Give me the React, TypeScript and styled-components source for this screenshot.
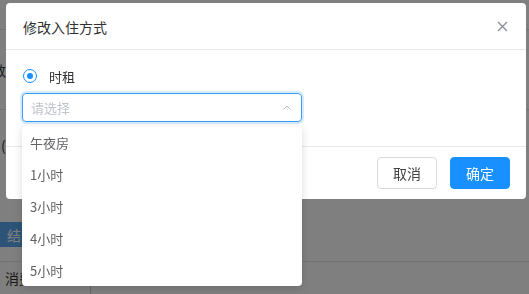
import React from "react";
import styled, { createGlobalStyle } from "styled-components";

const Global = createGlobalStyle`
  html, body { margin: 0; padding: 0; background: #fff; }
  body { font-family: "Noto Sans CJK SC", "Noto Sans", sans-serif; width: 529px; height: 294px; overflow: hidden; }
  * { box-sizing: border-box; }
`;

/* ---------- background page ---------- */
const Page = styled.div`
  width: 529px;
  height: 294px;
  display: flex;
  flex-direction: column;
  color: #333;
  font-size: 14px;
  overflow: hidden;
`;
const PageTop = styled.div`
  height: 30px;
  border-bottom: 1px solid #e2e2e2;
`;
const PageSection = styled.div<{ $h: number; $line?: boolean; $indent: number }>`
  height: ${(p) => p.$h}px;
  display: flex;
  align-items: center;
  margin-left: ${(p) => p.$indent}px;
  border-bottom: ${(p) => (p.$line ? "1px solid #e6e6e6" : "none")};
  line-height: 20px;
`;
const Spacer = styled.div<{ $h: number }>`
  height: ${(p) => p.$h}px;
`;
const BlueBar = styled.div`
  height: 25px;
  width: 120px;
  background: #5aa9f0;
  color: #fff;
  display: flex;
  align-items: center;
  padding-left: 7px;
  font-size: 14px;
`;
const BottomRow = styled.div`
  flex: 1;
  border-top: 1px solid #e6e6e6;
  margin-top: 14px;
  display: flex;
  align-items: center;
  padding-left: 5px;
  gap: 6px;
  font-size: 14px;
`;
const BottomField = styled.div`
  margin-left: 20px;
  height: 100%;
  border-left: 1px solid #ccc;
  display: flex;
  align-items: center;
  padding-left: 11px;
  gap: 10px;
`;
const Check = styled.span`
  width: 13px;
  height: 13px;
  border: 1px solid #bbb;
  border-radius: 2px;
  background: #fff;
`;

/* ---------- modal ---------- */
const Mask = styled.div`
  position: fixed;
  inset: 0;
  background: rgba(0, 0, 0, 0.5);
`;
const Modal = styled.div`
  position: absolute;
  left: 6px;
  top: 3px;
  width: 520px;
  background: #fff;
  border-radius: 4px;
  display: flex;
  flex-direction: column;
`;
const Header = styled.div`
  height: 47px;
  border-bottom: 1px solid #e8e8e8;
  display: flex;
  align-items: center;
  justify-content: space-between;
  padding: 0 18px 0 17px;
`;
const Title = styled.div`
  font-size: 14px;
  color: #303133;
  padding-top: 1px;
`;
const Close = styled.button`
  border: none;
  background: none;
  padding: 0;
  width: 12px;
  height: 12px;
  display: flex;
  align-items: center;
  justify-content: center;
  cursor: pointer;
`;
const Body = styled.div`
  height: 97px;
  padding: 15px 16px 0 16px;
  display: flex;
  flex-direction: column;
  gap: 6px;
  border-bottom: 1px solid #e8e8e8;
`;
const RadioRow = styled.label`
  display: flex;
  align-items: center;
  gap: 12px;
  height: 22px;
  padding-left: 1px;
  font-size: 13px;
  color: #303133;
`;
const RadioDot = styled.span`
  width: 14px;
  height: 14px;
  border-radius: 50%;
  border: 1px solid #1890ff;
  display: flex;
  align-items: center;
  justify-content: center;
  &::after {
    content: "";
    width: 6px;
    height: 6px;
    border-radius: 50%;
    background: #1890ff;
  }
`;
const SelectWrap = styled.div`
  position: relative;
  width: 280px;
`;
const SelectBox = styled.div`
  height: 29px;
  border: 1px solid #3a9cf5;
  border-radius: 4px;
  box-shadow: 0 0 0 2px rgba(24, 144, 255, 0.18);
  display: flex;
  align-items: center;
  justify-content: space-between;
  padding: 0 10px 0 8px;
  font-size: 13px;
  color: #c0c4cc;
`;
const Dropdown = styled.ul`
  position: absolute;
  left: 0;
  top: 33px;
  width: 280px;
  margin: 0;
  padding: 0;
  list-style: none;
  background: #fff;
  border-radius: 4px;
  box-shadow: 0 2px 8px rgba(0, 0, 0, 0.15);
  z-index: 5;
`;
const Option = styled.li`
  height: 32px;
  display: flex;
  align-items: center;
  padding-left: 8px;
  font-size: 13px;
  color: #606266;
`;
const Footer = styled.div`
  height: 52px;
  display: flex;
  justify-content: flex-end;
  align-items: center;
  gap: 13px;
  padding-right: 16px;
`;
const Btn = styled.button<{ $primary?: boolean }>`
  width: 60px;
  height: 32px;
  border-radius: 4px;
  font-family: inherit;
  font-size: 14px;
  padding: 0;
  cursor: pointer;
  border: 1px solid ${(p) => (p.$primary ? "#1890ff" : "#d9d9d9")};
  background: ${(p) => (p.$primary ? "#1890ff" : "#fff")};
  color: ${(p) => (p.$primary ? "#fff" : "#444")};
`;

const options = ["午夜房", "1小时", "3小时", "4小时", "5小时"];

export default function App() {
  return (
    <>
      <Global />
      <Page>
        <PageTop />
        <PageSection $h={80} $line $indent={-8}>
          数量
        </PageSection>
        <PageSection $h={70} $indent={1}>(</PageSection>
        <Spacer $h={42} />
        <BlueBar>结账</BlueBar>
        <BottomRow>
          消费 金额
          <BottomField>
            <Check />
            已结算 消费记录
          </BottomField>
        </BottomRow>
      </Page>
      <Mask>
        <Modal>
          <Header>
            <Title>修改入住方式</Title>
            <Close aria-label="close">
              <svg width="11" height="11" viewBox="0 0 11 11">
                <path d="M1 1L10 10M10 1L1 10" stroke="#8c9096" strokeWidth="1.4" fill="none" />
              </svg>
            </Close>
          </Header>
          <Body>
            <RadioRow>
              <RadioDot />
              时租
            </RadioRow>
            <SelectWrap>
              <SelectBox>
                请选择
                <svg width="8" height="5" viewBox="0 0 8 5">
                  <path d="M0.5 4.5L4 1L7.5 4.5" stroke="#b8bcc4" strokeWidth="1" fill="none" />
                </svg>
              </SelectBox>
              <Dropdown>
                {options.map((o) => (
                  <Option key={o}>{o}</Option>
                ))}
              </Dropdown>
            </SelectWrap>
          </Body>
          <Footer>
            <Btn>取消</Btn>
            <Btn $primary>确定</Btn>
          </Footer>
        </Modal>
      </Mask>
    </>
  );
}
